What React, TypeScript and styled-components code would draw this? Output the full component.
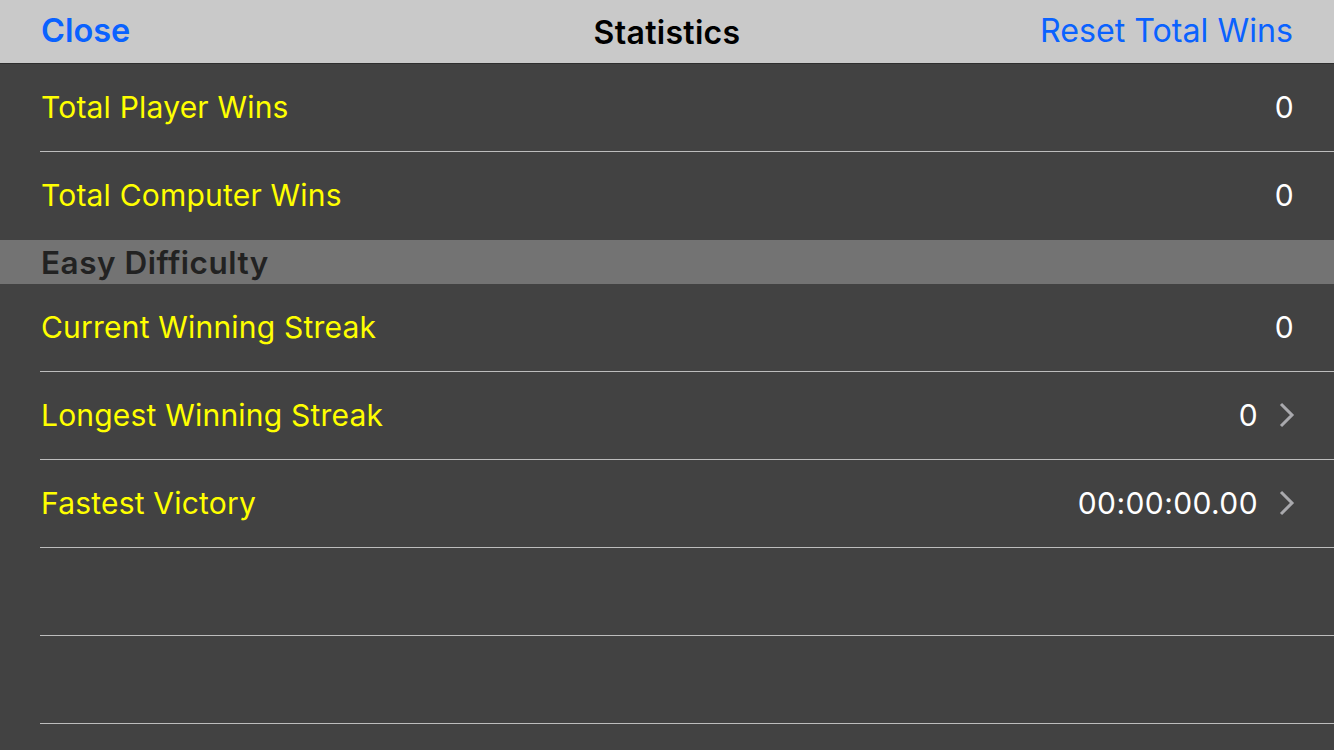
import styled, { createGlobalStyle } from "styled-components";

const GlobalStyle = createGlobalStyle`
  *, *::before, *::after {
    box-sizing: border-box;
  }
  html, body {
    margin: 0;
    padding: 0;
    background: #424242;
  }
  body {
    font-family: Inter, "Noto Sans", "Liberation Sans", sans-serif;
    -webkit-font-smoothing: antialiased;
  }
`;

const Screen = styled.div`
  width: 1334px;
  height: 750px;
  overflow: hidden;
  background: #424242;
  display: flex;
  flex-direction: column;
`;

const NavBar = styled.header`
  height: 64px;
  flex: none;
  display: grid;
  grid-template-columns: 1fr auto 1fr;
  align-items: center;
  padding: 0 41px 4px;
  background: #c9c9c9;
  border-bottom: 1px solid #2e2e2e;
`;

const NavButton = styled.button<{ $bold?: boolean; $align: "start" | "end" }>`
  justify-self: ${(p) => p.$align};
  margin-top: 2px;
  border: 0;
  padding: 0;
  background: none;
  font-family: inherit;
  font-size: ${(p) => (p.$bold ? "32.5px" : "32.2px")};
  font-weight: ${(p) => (p.$bold ? 600 : 400)};
  color: #0a62ff;
`;

const NavTitle = styled.h1`
  margin: 5px 0 0;
  font-size: 32px;
  font-weight: 600;
  color: #000;
  letter-spacing: 0.3px;
`;

const List = styled.ul`
  margin: 0;
  padding: 0;
  list-style: none;
`;

const Row = styled.li<{ $last?: boolean }>`
  height: 88px;
  margin-left: 40px;
  padding-right: 40px;
  padding-bottom: 2px;
  display: flex;
  align-items: center;
  border-bottom: ${(p) => (p.$last ? "none" : "1px solid #bdbdbd")};
`;

const Label = styled.span`
  flex: 1;
  padding-left: 1px;
  font-size: 30px;
  color: #ffff00;
  letter-spacing: 0.2px;
`;

const Value = styled.span`
  font-size: 30px;
  color: #fff;
  letter-spacing: 0.4px;
`;

const Chevron = styled.svg`
  width: 16px;
  height: 26px;
  margin-left: 21px;
  margin-right: -1px;
  flex: none;
`;

const SectionHeader = styled.div`
  height: 44px;
  display: flex;
  align-items: center;
  padding-left: 41px;
  background: #737373;
  font-size: 31.5px;
  font-weight: 600;
  color: #222;
  letter-spacing: 0.5px;
`;

type Stat = { label: string; value: string; more?: boolean; last?: boolean };

const totals: Stat[] = [
  { label: "Total Player Wins", value: "0" },
  { label: "Total Computer Wins", value: "0", last: true },
];

const easy: Stat[] = [
  { label: "Current Winning Streak", value: "0" },
  { label: "Longest Winning Streak", value: "0", more: true },
  { label: "Fastest Victory", value: "00:00:00.00", more: true },
];

const StatRow = ({ label, value, more, last }: Stat) => (
  <Row $last={last}>
    <Label>{label}</Label>
    <Value>{value}</Value>
    {more && (
      <Chevron viewBox="0 0 16 26">
        <path d="M2 2 L13 13 L2 24" fill="none" stroke="#a9a9ad" strokeWidth="3" />
      </Chevron>
    )}
  </Row>
);

export default function App() {
  return (
    <Screen>
      <GlobalStyle />
      <NavBar>
        <NavButton $bold $align="start">Close</NavButton>
        <NavTitle>Statistics</NavTitle>
        <NavButton $align="end">Reset Total Wins</NavButton>
      </NavBar>
      <List>
        {totals.map((s) => (
          <StatRow key={s.label} {...s} />
        ))}
      </List>
      <SectionHeader>Easy Difficulty</SectionHeader>
      <List>
        {easy.map((s) => (
          <StatRow key={s.label} {...s} />
        ))}
        <Row />
        <Row />
      </List>
    </Screen>
  );
}
